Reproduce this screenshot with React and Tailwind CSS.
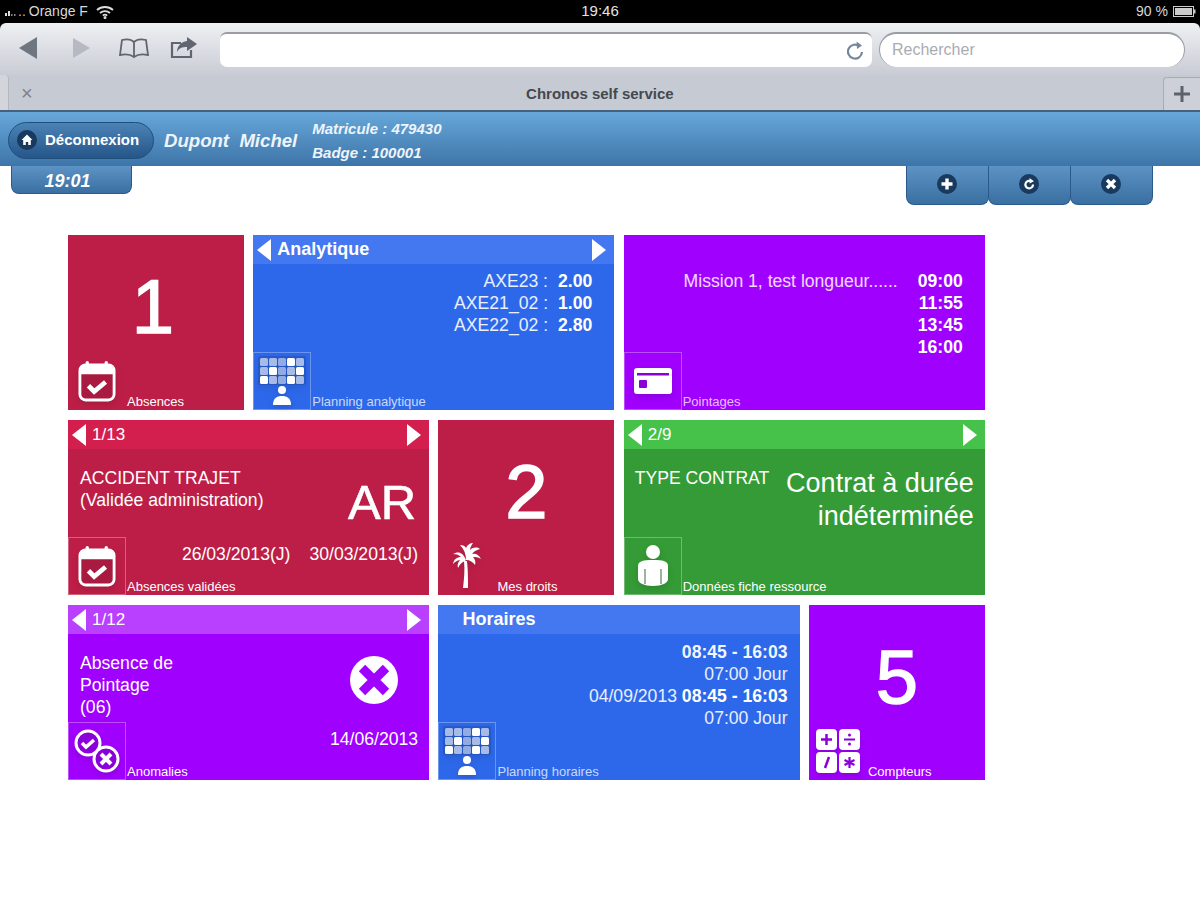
import React from "react";

const FONT = { fontFamily: '"Liberation Sans", Arial, sans-serif' };

const themes = {
  red: { bg: "bg-[#bd1e47]", head: "bg-[#d31f4e]", fill: "#a81a3f" },
  blue: { bg: "bg-[#2d68ea]", head: "bg-[#4378f1]", fill: "#2d68ea" },
  purple: { bg: "bg-[#a000fd]", head: "bg-[#b840fe]", fill: "#8a00d8" },
  green: { bg: "bg-[#349b36]", head: "bg-[#46c14a]", fill: "#349b36" },
};

function CalendarIcon({ fill }) {
  return (
    <svg width="38" height="42" viewBox="0 0 40 44">
      <rect x="8" y="1" width="3.5" height="8" rx="1.7" fill="#fff" />
      <rect x="28" y="1" width="3.5" height="8" rx="1.7" fill="#fff" />
      <rect x="2" y="5" width="36" height="37" rx="6" fill={fill} stroke="#fff" strokeWidth="3" />
      <path d="M2 11a6 6 0 0 1 6-6h24a6 6 0 0 1 6 6v4H2z" fill="#fff" />
      <path d="M11 27l6 6 12-10" fill="none" stroke="#fff" strokeWidth="5" />
    </svg>
  );
}

function PlanningIcon() {
  const cells = [
    0.6, 0.6, 0.5, 1, 0.6,
    0.6, 1, 0.5, 0.6, 1,
    1, 0.6, 0.5, 1, 0.6,
  ];
  return (
    <svg width="48" height="50" viewBox="0 0 48 50">
      <rect x="0" y="0" width="48" height="29" rx="2" fill="#1e4ba8" opacity="0.45" />
      {cells.map((o, i) => (
        <rect key={i} x={2 + (i % 5) * 9} y={2 + Math.floor(i / 5) * 9} width="8" height="8" rx="1.5" fill="#fff" opacity={o} />
      ))}
      <circle cx="24" cy="34" r="4" fill="#fff" />
      <path d="M15 49c0-7 4-9 9-9s9 2 9 9z" fill="#fff" />
    </svg>
  );
}

function CardIcon({ fill }) {
  return (
    <svg width="40" height="28" viewBox="0 0 40 28">
      <rect x="1" y="1" width="38" height="26" rx="3" fill="#fff" />
      <rect x="4" y="6" width="32" height="2.5" fill={fill} />
      <rect x="6" y="13" width="8" height="8" rx="1" fill={fill} />
    </svg>
  );
}

function PalmIcon() {
  return (
    <svg width="32" height="46" viewBox="0 0 32 46">
      <path d="M13 18c1 9 0 18-1 27h5c0-9 0-18-1-27z" fill="#fff" />
      <path d="M15 17C12 9 7 8 2 11c4 0 6 1 8 3-4 0-7 2-8 7 3-3 5-4 7-4-2 2-3 5-2 8 2-4 4-6 7-7z" fill="#fff" />
      <path d="M15 17c0-6-2-11-6-15 3 0 5 1 6 3 1-3 4-5 7-5-2 3-3 5-3 7 3-3 7-3 10-1-3 1-6 2-8 5 4-1 7 1 9 5-3-2-6-2-8-2 2 2 3 5 2 8-2-3-5-5-9-5z" fill="#fff" />
    </svg>
  );
}

function PersonIcon() {
  return (
    <svg width="34" height="44" viewBox="0 0 34 44">
      <circle cx="17" cy="8" r="7" fill="#fff" />
      <path d="M2 22c0-5 5-6 15-6s15 1 15 6v13c0 4-6 7-15 7S2 39 2 35z" fill="#fff" />
      <path d="M9 25v15M25 25v15" stroke="#3b6b3c" strokeWidth="1" />
    </svg>
  );
}

function CheckCrossIcon({ fill }) {
  return (
    <svg width="46" height="44" viewBox="0 0 46 44">
      <circle cx="14" cy="14" r="12" fill={fill} stroke="#fff" strokeWidth="3" />
      <path d="M8 14l4 4 8-7" fill="none" stroke="#fff" strokeWidth="3.5" />
      <circle cx="32" cy="30" r="12" fill={fill} stroke="#fff" strokeWidth="3" />
      <path d="M27 25l10 10M37 25L27 35" fill="none" stroke="#fff" strokeWidth="4" />
    </svg>
  );
}

function CalcIcon({ fill }) {
  return (
    <svg width="46" height="46" viewBox="0 0 46 46">
      <rect x="1" y="1" width="21" height="21" rx="4" fill="#fff" />
      <rect x="24" y="1" width="21" height="21" rx="4" fill="#fff" />
      <rect x="1" y="24" width="21" height="21" rx="4" fill="#fff" />
      <rect x="24" y="24" width="21" height="21" rx="4" fill="#fff" />
      <path d="M6 11.5h11M11.5 6v11" stroke={fill} strokeWidth="2.5" />
      <path d="M29 11.5h11" stroke={fill} strokeWidth="2" />
      <circle cx="34.5" cy="7" r="1.5" fill={fill} />
      <circle cx="34.5" cy="16" r="1.5" fill={fill} />
      <path d="M14 29l-4 11" stroke={fill} strokeWidth="2.5" />
      <path d="M34.5 29v11M29.5 32l10 5M39.5 32l-10 5" stroke={fill} strokeWidth="2.2" />
    </svg>
  );
}

function TileHeader({ head, title, bold, arrows, titleClass }) {
  return (
    <div className={`h-[29px] shrink-0 flex items-center text-white ${head}`}>
      {arrows && <div className="ml-[4px] w-0 h-0 border-y-[11px] border-y-transparent border-r-[14px] border-r-white" />}
      <span className={`${titleClass} ${bold ? "font-bold text-[18px]" : "text-[17px]"}`}>{title}</span>
      {arrows && <div className="ml-auto mr-[8px] w-0 h-0 border-y-[11px] border-y-transparent border-l-[14px] border-l-white" />}
    </div>
  );
}

function Tile({ color, span, title, bold, arrows = true, titleClass = "ml-[6px]", icon, boxed = true, label, labelClass = "text-white", bodyClass = "", children }) {
  const t = themes[color];
  return (
    <div className={`flex flex-col h-[175px] text-white ${t.bg} ${span ? "col-span-2" : ""}`}>
      {title && <TileHeader head={t.head} title={title} bold={bold} arrows={arrows} titleClass={titleClass} />}
      <div className={`flex-1 min-h-0 text-[17.6px] leading-[22px] ${bodyClass}`}>{children}</div>
      <div className="h-[58px] shrink-0 flex">
        <div className={`w-[58px] h-[58px] shrink-0 flex items-center justify-center ${boxed ? "border border-white/30" : ""}`}>
          <div className="flex drop-shadow-md">{icon}</div>
        </div>
        <div className={`self-end ml-px text-[13px] leading-[16px] whitespace-nowrap ${labelClass}`}>{label}</div>
      </div>
    </div>
  );
}

function BigNumber({ value, className = "" }) {
  return <div className={`text-center text-[76px] leading-[76px] pt-[34px] [-webkit-text-stroke:1.5px_white] ${className}`}>{value}</div>;
}

function RoundGlyph({ children }) {
  return (
    <svg width="20" height="20" viewBox="0 0 20 20">
      <circle cx="10" cy="10" r="10" fill="#173a5e" />
      {children}
    </svg>
  );
}

function TabButton({ children }) {
  return (
    <div className="w-[83px] h-[39px] -ml-px flex items-center justify-center rounded-b-[8px] border border-t-0 border-[#2a5a8a] bg-gradient-to-b from-[#5c93c4] to-[#3a6fa2] pb-[3px] pr-[2px]">
      {children}
    </div>
  );
}

export default function App() {
  return (
    <div className="w-[1200px] h-[900px] overflow-hidden bg-white flex flex-col" style={FONT}>
      {/* status bar */}
      <div className="h-[23px] shrink-0 bg-black text-[#d8d8d8] text-[14px] grid grid-cols-3 items-center px-[4px]">
        <div className="flex items-center">
          <svg width="12" height="8" viewBox="0 0 12 8" className="ml-[1px]">
            <rect x="0" y="5" width="2" height="3" fill="#ddd" />
            <rect x="3" y="3" width="2" height="5" fill="#ddd" />
            <rect x="6" y="6" width="1.5" height="2" fill="#888" />
            <rect x="9" y="6" width="1.5" height="2" fill="#888" />
          </svg>
          <span className="ml-[1px] text-[#bbb]">..</span>
          <span className="ml-[3px]">Orange F</span>
          <svg width="18" height="14" viewBox="0 0 18 14" fill="none" stroke="#ddd" strokeWidth="1.8" className="ml-[8px]">
            <path d="M1 5c4.5-4 11.5-4 16 0M4 8c2.8-2.5 7.2-2.5 10 0M6.8 10.6c1.2-1 3.2-1 4.4 0" />
            <circle cx="9" cy="12.6" r="0.6" fill="#ddd" />
          </svg>
        </div>
        <span className="text-center text-[15px] text-[#e4e4e4]">19:46</span>
        <div className="flex items-center justify-end">
          <span>90 %</span>
          <svg width="23" height="11" viewBox="0 0 23 11" className="ml-[5px]">
            <rect x="0.5" y="0.5" width="20" height="10" fill="none" stroke="#ccc" />
            <rect x="2" y="2" width="17" height="7" fill="#ccc" />
            <rect x="21" y="3.5" width="1.5" height="4" fill="#ccc" />
          </svg>
        </div>
      </div>

      {/* browser toolbar */}
      <div className="h-[52px] shrink-0 bg-black">
        <div className="h-full rounded-t-[6px] bg-gradient-to-b from-[#eef0f3] to-[#c9ccd4] flex items-center pl-[19px] pr-[15px]">
          <svg width="19" height="22" viewBox="0 0 19 22" className="mb-[2px]"><path d="M18 0v22L0 11z" fill="#6f7680" /></svg>
          <svg width="17" height="22" viewBox="0 0 17 22" className="ml-[35px] mb-[2px]"><path d="M0 1v20l17-10z" fill="#b4b9c2" /></svg>
          <svg width="30" height="22" viewBox="0 0 30 22" fill="none" stroke="#5f6670" strokeWidth="1.8" className="ml-[29px] mb-[2px]">
            <path d="M15 5c-3-3-8-3-12-2l-2 15c5-1 10-1 14 2 4-3 9-3 14-2L27 3c-4-1-9-1-12 2zM15 5v15" />
          </svg>
          <svg width="28" height="22" viewBox="0 0 28 22" className="ml-[21px] mb-[2px]">
            <path d="M2 6h9M2 5v15h19v-7" fill="none" stroke="#5f6670" strokeWidth="2.2" />
            <path d="M17 0l10 7-10 7v-4c-5 0-8 1-10 5 0-6 4-10 10-11z" fill="#5f6670" />
          </svg>
          <div className="ml-[22px] w-[652px] h-[35px] bg-white rounded-[7px] border-t-2 border-[#9a9da3] flex items-center justify-end pr-[8px]">
            <svg width="17" height="20" viewBox="0 0 17 20" fill="none" stroke="#74879a" strokeWidth="2.2">
              <path d="M12.5 6.2A7 7 0 1 0 15 12" />
              <path d="M9.5 1.5l5.5 4-5 3.5z" fill="#74879a" stroke="none" />
            </svg>
          </div>
          <div className="ml-[7px] flex-1 h-[35px] bg-white rounded-full border-t-2 border-x border-[#9a9da3] flex items-center pl-[12px] text-[16px] text-[#a9acb0]">Rechercher</div>
        </div>
      </div>

      {/* tab strip */}
      <div className="h-[37px] shrink-0 bg-[#c6cad2] border-b-2 border-[#45617d] flex items-center">
        <div className="w-[9px] h-full bg-[#d3d5da] rounded-tr-[4px] border-r border-[#b4b7bd]" />
        <span className="ml-[12px] text-[#7d828b] text-[20px] leading-none">×</span>
        <span className="flex-1 text-center font-bold text-[15px] text-[#44484f] pl-[4px] pt-[3px]">Chronos self service</span>
        <div className="w-[37px] h-[33px] self-end rounded-tl-[4px] border-l border-t border-[#a8abb1] bg-[#cdd0d6] flex items-center justify-center">
          <svg width="16" height="16" viewBox="0 0 16 16"><path d="M8 0v16M0 8h16" stroke="#5c626c" strokeWidth="3" /></svg>
        </div>
      </div>

      {/* app header */}
      <div className="h-[54px] shrink-0 bg-gradient-to-b from-[#67a7da] to-[#3e75a8] flex items-center pl-[8px] pt-[3px] text-white">
        <div className="w-[146px] h-[37px] rounded-full border border-[#1f4f7d] bg-gradient-to-b from-[#4b83b6] to-[#26568a] flex items-center pl-[8px] mt-[-1px]">
          <svg width="20" height="20" viewBox="0 0 20 20">
            <circle cx="10" cy="10" r="10" fill="#173a5e" />
            <path d="M10 4.5l5.5 5.5h-1.7v5h-2.6v-3H8.8v3H6.2v-5H4.5z" fill="#fff" />
          </svg>
          <span className="ml-[8px] font-bold text-[15px]">Déconnexion</span>
        </div>
        <span className="ml-[10px] italic font-bold text-[18.6px] whitespace-pre text-[#eef4fa]">Dupont  Michel</span>
        <div className="ml-[15px] italic font-bold text-[15px] leading-[24px] text-[#eef4fa]">
          <div>Matricule : 479430</div>
          <div>Badge : 100001</div>
        </div>
      </div>

      {/* tabs hanging under header */}
      <div className="h-[39px] shrink-0 flex justify-between items-start pl-[11px] pr-[47px]">
        <div className="w-[121px] h-[28px] rounded-b-[8px] border border-t-0 border-[#2a5a8a] bg-gradient-to-b from-[#5c93c4] to-[#3a6fa2] flex items-center justify-center pr-[8px] pt-[3px] italic font-bold text-[18px] text-white">19:01</div>
        <div className="flex">
          <TabButton>
            <RoundGlyph><path d="M10 4.5v11M4.5 10h11" stroke="#fff" strokeWidth="3.4" /></RoundGlyph>
          </TabButton>
          <TabButton>
            <RoundGlyph>
              <path d="M12.6 7.6A3.8 3.8 0 1 0 14 10.5" fill="none" stroke="#fff" strokeWidth="2.2" />
              <path d="M10.5 4l4.5 3.2-4.5 2.4z" fill="#fff" />
            </RoundGlyph>
          </TabButton>
          <TabButton>
            <RoundGlyph><path d="M6 6l8 8M14 6l-8 8" stroke="#fff" strokeWidth="3.4" /></RoundGlyph>
          </TabButton>
        </div>
      </div>

      {/* tiles */}
      <div className="ml-[68px] mt-[30px] grid grid-cols-[repeat(5,175.8px)] gap-x-[9.45px] gap-y-[10px] w-max">
        <Tile color="red" boxed={false} icon={<CalendarIcon fill={themes.red.fill} />} label="Absences">
          <BigNumber value="1" className="pr-[6px]" />
        </Tile>

        <Tile color="blue" span title="Analytique" bold icon={<PlanningIcon />} label="Planning analytique" labelClass="text-white/75" bodyClass="pt-[6px] pr-[22px]">
          <div className="flex justify-end gap-[10px]">
            <div className="text-right text-white/90">
              <div>AXE23 :</div>
              <div>AXE21_02 :</div>
              <div>AXE22_02 :</div>
            </div>
            <div className="font-bold text-right">
              <div>2.00</div>
              <div>1.00</div>
              <div>2.80</div>
            </div>
          </div>
        </Tile>

        <Tile color="purple" span icon={<CardIcon fill={themes.purple.fill} />} label="Pointages" labelClass="text-white/75" bodyClass="pt-[35px] pr-[22px]">
          <div className="flex justify-end gap-[20px]">
            <div className="text-white/85">Mission 1, test longueur......</div>
            <div className="font-bold text-right">
              <div>09:00</div>
              <div>11:55</div>
              <div>13:45</div>
              <div>16:00</div>
            </div>
          </div>
        </Tile>

        <Tile color="red" span title="1/13" icon={<CalendarIcon fill={themes.red.fill} />} label="Absences validées" bodyClass="pl-[12px] pr-[11px] pt-[18px]">
          <div className="flex justify-between h-[76px]">
            <div>
              <div>ACCIDENT TRAJET</div>
              <div>(Validée administration)</div>
            </div>
            <div className="text-[49px] leading-[48px] mt-[11px] mr-[2px] [-webkit-text-stroke:0.6px_white]">AR</div>
          </div>
          <div className="flex justify-end gap-[19px]">
            <span>26/03/2013(J)</span>
            <span>30/03/2013(J)</span>
          </div>
        </Tile>

        <Tile color="red" boxed={false} icon={<PalmIcon />} label="Mes droits">
          <BigNumber value="2" />
        </Tile>

        <Tile color="green" span title="2/9" icon={<PersonIcon />} label="Données fiche ressource" bodyClass="pl-[11px] pr-[11px] pt-[18px]">
          <div className="flex justify-between">
            <div className="whitespace-nowrap">TYPE CONTRAT</div>
            <div className="text-right text-[27px] leading-[33px]">
              Contrat à durée
              <br />
              indéterminée
            </div>
          </div>
        </Tile>

        <Tile color="purple" span title="1/12" icon={<CheckCrossIcon fill={themes.purple.fill} />} label="Anomalies" bodyClass="pl-[12px] pr-[11px] pt-[18px]">
          <div className="flex justify-between h-[76px] pr-[20px]">
            <div>
              <div>Absence de</div>
              <div>Pointage</div>
              <div>(06)</div>
            </div>
            <svg width="48" height="48" viewBox="0 0 48 48" className="mt-[4px]">
              <circle cx="24" cy="24" r="24" fill="#fff" />
              <path d="M12 12l24 24M36 12L12 36" stroke="#a000fd" strokeWidth="9" />
            </svg>
          </div>
          <div className="text-right">14/06/2013</div>
        </Tile>

        <Tile color="blue" span title="Horaires" bold arrows={false} titleClass="ml-[24px]" icon={<PlanningIcon />} label="Planning horaires" labelClass="text-white/75" bodyClass="pt-[7px] pr-[12px] text-right">
          <div className="font-bold text-white/95">08:45 - 16:03</div>
          <div className="text-white/90">07:00 Jour</div>
          <div className="text-white/90">
            04/09/2013 <span className="font-bold text-white">08:45 - 16:03</span>
          </div>
          <div className="text-white/90">07:00 Jour</div>
        </Tile>

        <Tile color="purple" boxed={false} icon={<CalcIcon fill={themes.purple.fill} />} label="Compteurs">
          <BigNumber value="5" />
        </Tile>
      </div>
    </div>
  );
}
